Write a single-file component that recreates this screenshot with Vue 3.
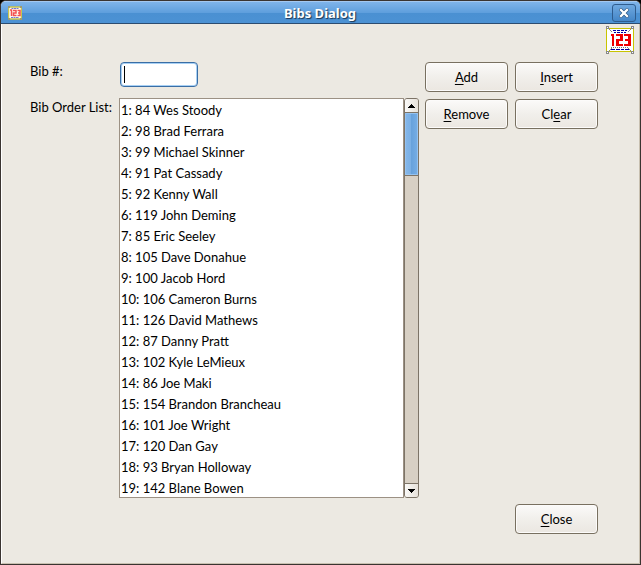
<script setup>
import { ref } from 'vue'

const bib = ref('')
const selected = ref([])
const riders = [
  '84 Wes Stoody', '98 Brad Ferrara', '99 Michael Skinner', '91 Pat Cassady',
  '92 Kenny Wall', '119 John Deming', '85 Eric Seeley', '105 Dave Donahue',
  '100 Jacob Hord', '106 Cameron Burns', '126 David Mathews', '87 Danny Pratt',
  '102 Kyle LeMieux', '86 Joe Maki', '154 Brandon Brancheau', '101 Joe Wright',
  '120 Dan Gay', '93 Bryan Holloway', '142 Blane Bowen'
]
</script>

<template>
  <div class="window">
    <header class="titlebar">
      <svg class="app-icon" viewBox="0 0 28 28" aria-hidden="true">
        <rect x="1" y="2" width="26" height="24" fill="#fffef0" stroke="#c9c34c" stroke-width="3" />
        <path d="M0 0h4v4H0zM24 0h4v4h-4zM0 24h4v4H0zM24 24h4v4h-4z" fill="#a09c70" />
        <path d="M7 5h14M6 23h16" stroke="#7578d4" stroke-width="2" stroke-dasharray="4 1" />
        <path d="M4 8h3v12M10 9h6v5h-5v5h6M19 9h5v10h-5M20 14h4" fill="none" stroke="#f35050" stroke-width="3" />
      </svg>
      <h1 class="title">Bibs Dialog</h1>
      <button class="close-x" type="button" aria-label="Close window">
        <svg viewBox="0 0 10 10" aria-hidden="true">
          <path d="M2 2l6 6M8 2l-6 6" stroke="#24507f" stroke-width="3.6" stroke-linecap="square" />
          <path d="M2 2l6 6M8 2l-6 6" stroke="#fff" stroke-width="2.4" stroke-linecap="square" />
        </svg>
      </button>
    </header>

    <main class="body">
      <div class="banner">
        <svg class="logo" viewBox="0 0 28 28" shape-rendering="crispEdges" aria-hidden="true">
          <rect x="1" y="3" width="26" height="22" fill="#fff" />
          <path d="M0 2h28v24H0zM1 3v22h26V3z" fill="#c8c400" fill-rule="evenodd" />
          <path d="M7 4h3v1H7zM11 4h3v1h-3zM15 4h3v1h-3zM19 4h2v1h-2zM8 6h2v1H8zM11 6h3v1h-3zM15 6h2v1h-2zM18 6h2v1h-2z" fill="#0000a0" />
          <path d="M5 21h1v1H5zM7 21h1v1H7zM9 21h1v1H9zM11 21h1v1h-1zM13 21h1v1h-1zM15 21h1v1h-1zM17 21h1v1h-1zM19 21h1v1h-1zM21 21h1v1h-1z" fill="#777" />
          <path d="M4 23h5v1H4zM10 23h4v1h-4zM15 23h3v1h-3zM19 23h4v1h-4z" fill="#0000a0" />
          <path d="M5 8h3v12H6V10H5zM10 8h7v7h-4v3h4v2h-7v-7h4v-3h-4zM18 8h7v12h-7v-2h4v-3h-3v-2h3v-3h-4z" fill="#f00000" />
          <path d="M3 3h1v1H3zM4 4h1v1H4zM5 5h1v1H5zM24 3h1v1h-1zM23 4h1v1h-1zM22 5h1v1h-1zM3 24h1v1H3zM4 23h1v1H4zM5 22h1v1H5zM24 24h1v1h-1zM23 23h1v1h-1zM22 22h1v1h-1z" fill="#888" />
          <path d="M0 0h3v3H0zM25 0h3v3h-3zM0 25h3v3H0zM25 25h3v3h-3z" fill="#888" />
          <path d="M1 1h1v1H1zM26 1h1v1h-1zM1 26h1v1H1zM26 26h1v1h-1z" fill="#fff" />
        </svg>
      </div>

      <form class="content" @submit.prevent>
        <div class="fields">
          <label for="bib">Bib #:</label>
          <input id="bib" v-model="bib" class="bib" type="text" autocomplete="off" />
          <label for="order">Bib Order List:</label>
          <div class="list-box">
            <select id="order" v-model="selected" class="list" size="19" multiple>
              <option v-for="(rider, i) in riders" :key="rider" :value="rider">{{ i + 1 }}: {{ rider }}</option>
            </select>
            <div class="scrollbar">
              <button class="arrow" type="button" aria-label="Scroll up">
                <svg viewBox="0 0 7 4" shape-rendering="crispEdges" aria-hidden="true"><path d="M3 0h1v1h1v1h1v1h1v1H0V3h1V2h1V1h1z" /></svg>
              </button>
              <div class="track"><div class="thumb"></div></div>
              <button class="arrow" type="button" aria-label="Scroll down">
                <svg viewBox="0 0 7 4" shape-rendering="crispEdges" aria-hidden="true"><path d="M0 0h7v1H6v1H5v1H4v1H3V3H2V2H1V1H0z" /></svg>
              </button>
            </div>
          </div>
        </div>
        <div class="actions">
          <button class="btn" type="button"><u>A</u>dd</button>
          <button class="btn" type="button"><u>I</u>nsert</button>
          <button class="btn" type="button"><u>R</u>emove</button>
          <button class="btn" type="button">Cl<u>e</u>ar</button>
        </div>
      </form>

      <footer class="footer">
        <button class="btn" type="button"><u>C</u>lose</button>
      </footer>
    </main>
  </div>
</template>

<style>
body {
  margin: 0;
  background: #000;
}
</style>

<style scoped>
* {
  box-sizing: border-box;
}
.window {
  display: flex;
  flex-direction: column;
  min-height: 100vh;
  border: 1px solid #3a3431;
  border-radius: 6px 6px 0 0;
  background: #ece9e2;
  color: #000;
  font: 13px/18px Lato, "Noto Sans", sans-serif;
  overflow: hidden;
}
.titlebar {
  display: flex;
  align-items: center;
  height: 23px;
  padding: 0 4px 0 7px;
  border-top: 1px solid #a4c8f0;
  border-bottom: 1px solid #2c4c70;
  background: linear-gradient(#7fb4ea, #5f9fdd 50%, #4a90d2 52%, #4c92d4);
}
.app-icon {
  width: 14px;
  height: 14px;
}
.title {
  flex: 1;
  margin: 0;
  padding-left: 6px;
  color: #fff;
  font-family: "Noto Sans", sans-serif;
  font-size: 13px;
  font-weight: 700;
  text-align: center;
  text-shadow: 1px 1px 1px #1c3550;
}
.close-x {
  display: grid;
  place-items: center;
  width: 24px;
  height: 18px;
  padding: 0;
  border: 1px solid #2f5c8e;
  border-radius: 3px;
  background: linear-gradient(#6fa8e0, #4486c8);
}
.close-x svg {
  width: 10px;
  height: 10px;
}
.body {
  flex: 1;
  border: solid;
  border-width: 0 1px 1px;
  border-color: #fff #c8c0b0 #c8c0b0 #fff;
}
.banner {
  display: flex;
  justify-content: flex-end;
  height: 38px;
  padding: 2px 5px;
}
.logo {
  width: 28px;
  height: 28px;
}
.content {
  display: flex;
  gap: 6px;
  padding: 0 41px 0 28px;
}
.fields {
  flex: 1;
  display: grid;
  grid-template-columns: 89px 1fr;
  row-gap: 11px;
  align-items: start;
}
.bib {
  width: 78px;
  height: 25px;
  margin-left: 1px;
  padding: 0 4px;
  border: 1px solid #3a6ea5;
  border-radius: 4px;
  outline: none;
  background: linear-gradient(#000, #000) 3px 3px / 1px 17px no-repeat #fff;
  box-shadow: inset 0 0 0 1px #a8d0f4;
  caret-color: transparent;
  font: inherit;
}
.list-box {
  display: flex;
  height: 400px;
}
.list {
  flex: 1;
  min-width: 0;
  height: 100%;
  padding: 2px 0 0;
  border: 1px solid #9c9184;
  border-radius: 0;
  outline: none;
  appearance: none;
  background: #fff;
  color: #000;
  font: inherit;
  overflow: hidden;
}
.list option {
  height: 21px;
  min-height: 21px;
  padding: 1px;
  line-height: 19px;
}
label {
  white-space: nowrap;
}
.scrollbar {
  display: flex;
  flex-direction: column;
  width: 15px;
  border: 1px solid #7d7467;
  border-radius: 3px;
  background: #d8d0c4;
  overflow: hidden;
}
.arrow {
  display: grid;
  place-items: center;
  height: 13px;
  padding: 0;
  border: 0;
  background: linear-gradient(90deg, #faf9f7, #e6e1d9);
}
.arrow svg {
  width: 7px;
  height: 4px;
}
.track {
  flex: 1;
  border-bottom: 1px solid #7d7467;
}
.thumb {
  height: 64px;
  border: solid #7d7467;
  border-width: 1px 0;
  background: linear-gradient(90deg, #86b8ea, #78aee4 50%, #68a2dc 50%, #76aee6);
  box-shadow: inset 0 0 0 1px #94c2f0;
}
.actions {
  display: grid;
  grid-template-columns: 83px 83px;
  gap: 7px;
  align-content: start;
}
.btn {
  width: 83px;
  height: 30px;
  padding: 0;
  border: 1px solid #787060;
  border-radius: 4px;
  background: linear-gradient(#fbfaf9, #f1efeb 50%, #ebe7e1);
  box-shadow: inset 0 0 0 1px #fcfbfa;
  color: #000;
  font: inherit;
}
.btn u {
  text-underline-offset: 2px;
}
.footer {
  display: flex;
  justify-content: flex-end;
  padding: 6px 41px 28px;
}
</style>
